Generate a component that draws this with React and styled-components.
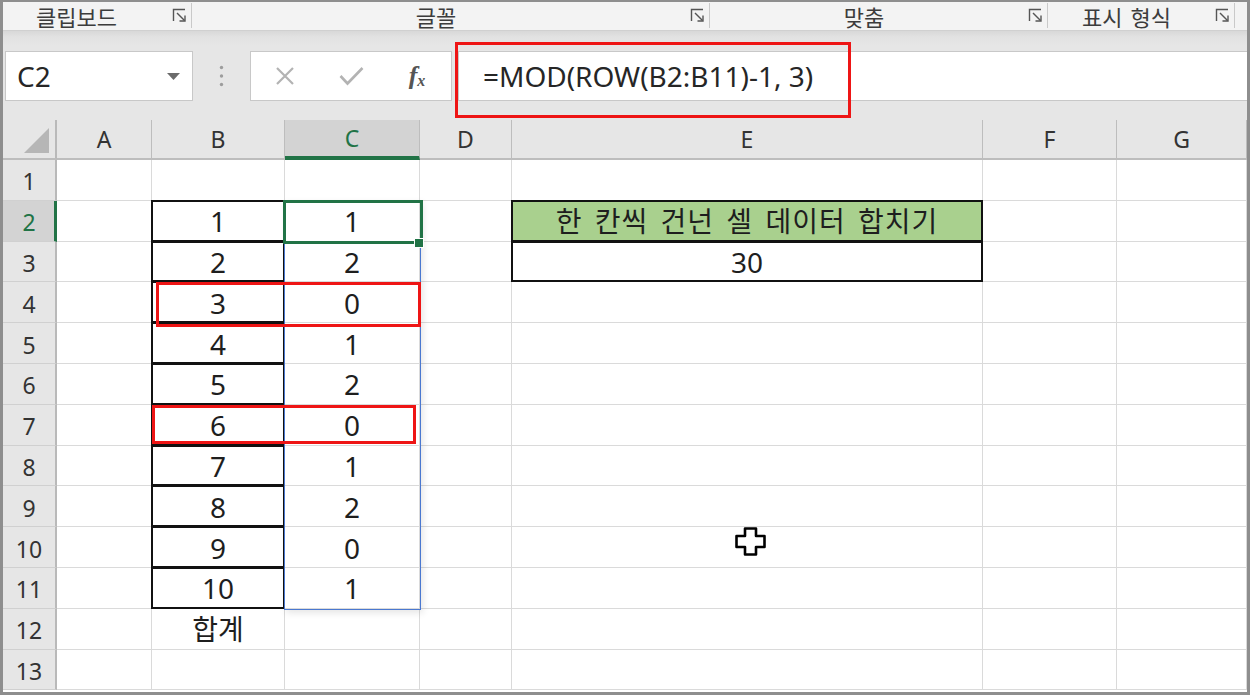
import React from "react";
import styled, { createGlobalStyle } from "styled-components";

const GlobalStyle = createGlobalStyle`
  *, *::before, *::after { box-sizing: border-box; }
  html, body { margin: 0; padding: 0; background: #ffffff; }
  body { font-family: "Noto Sans", "Noto Sans CJK KR", sans-serif; }
`;

const FONT = `"Noto Sans", "Noto Sans CJK KR", sans-serif`;
const KR = `"Noto Sans CJK KR", "Noto Sans", sans-serif`;
const GREEN = "#217346";

const Frame = styled.div`
  position: relative;
  width: 1250px;
  height: 695px;
  border: 3px solid #8e8e8e;
  border-top-width: 2px;
  overflow: hidden;
  background: #fff;
  display: flex;
  flex-direction: column;
`;

/* ---------- Ribbon group labels ---------- */
const Ribbon = styled.div`
  flex: none;
  height: 29px;
  display: flex;
  background: #f3f3f3;
  border-bottom: 1px solid #d0d0d0;
`;

const Group = styled.div`
  flex: none;
  width: ${(p) => p.$w}px;
  display: flex;
  align-items: center;
  padding-right: 4px;
  margin: 1px 0 2px;
  border-right: 1px solid #c9c9c9;
`;

const GroupLabel = styled.span`
  flex: 1;
  text-align: center;
  padding-right: ${(p) => p.$shift}px;
  font-family: ${KR};
  font-size: 22px;
  line-height: 1;
  word-spacing: 3px;
  color: #3c3c3c;
`;

const Launcher = () => (
  <svg width="15" height="15" viewBox="0 0 15 15" fill="none" stroke="#555" strokeWidth="1.4">
    <path d="M1.5 13V1.5H13" />
    <path d="M5 5l7.5 7.5" />
    <path d="M13 7.5V13H7.5" />
  </svg>
);

/* ---------- Formula bar ---------- */
const FormulaBar = styled.div`
  flex: none;
  height: 89px;
  display: flex;
  align-items: flex-start;
  padding: 20px 0 0 2px;
  background: linear-gradient(#d8d8d8, #e2e2e2 6px, #e6e6e6 14px);
`;

const WhiteBox = styled.div`
  flex: none;
  height: 50px;
  background: #fff;
  border: 1px solid #c8c8c8;
  display: flex;
  align-items: center;
`;

const NameBox = styled(WhiteBox)`
  width: 188px;
  padding: 0 12px 0 11px;
  justify-content: space-between;
  font-family: ${FONT};
  font-size: 28px;
  line-height: 1;
  color: #262626;
`;

const Grip = styled.div`
  flex: none;
  width: 57px;
  height: 50px;
  display: flex;
  align-items: center;
  justify-content: center;
`;

const ButtonBox = styled(WhiteBox)`
  width: 202px;
  display: grid;
  grid-template-columns: repeat(3, 66px);
  padding-left: 1px;
  justify-items: center;
`;

const Fx = styled.span`
  font-family: "Liberation Serif", serif;
  font-style: italic;
  font-weight: bold;
  font-size: 26px;
  line-height: 1;
  color: #555;
  & sub {
    font-size: 16px;
    vertical-align: -2px;
  }
`;

const FormulaInput = styled(WhiteBox)`
  flex: 1;
  margin-left: 6px;
  border-right: none;
  padding-left: 24px;
  font-family: ${FONT};
  font-size: 28px;
  line-height: 1;
  color: #262626;
`;

/* ---------- Sheet ---------- */
const COLS = [
  { id: "A", w: 95 },
  { id: "B", w: 133 },
  { id: "C", w: 135 },
  { id: "D", w: 92 },
  { id: "E", w: 471 },
  { id: "F", w: 134 },
  { id: "G", w: 130 },
];

const Sheet = styled.div`
  flex: none;
  display: grid;
  grid-template-columns: 54px ${COLS.map((c) => c.w + "px").join(" ")};
  grid-template-rows: 40px;
  grid-auto-rows: 40.8px;
`;

const Corner = styled.div`
  background: #e6e6e6;
  border-right: 2px solid #b9b9b9;
  border-bottom: 2px solid #bdbdbd;
  display: flex;
  align-items: flex-end;
  justify-content: flex-end;
  padding: 0 6px 5px 0;
`;

const CornerTriangle = styled.div`
  width: 25px;
  height: 25px;
  background: #b6b6b6;
  clip-path: polygon(100% 0, 100% 100%, 0 100%);
`;

const ColHead = styled.div`
  background: ${(p) => (p.$sel ? "#d3d3d3" : "#e6e6e6")};
  border-right: 1px solid #bdbdbd;
  border-bottom: ${(p) => (p.$sel ? `4px solid ${GREEN}` : "2px solid #bdbdbd")};
  display: flex;
  align-items: center;
  justify-content: center;
  padding-top: ${(p) => (p.$sel ? "1px" : "0")};
  font-family: ${FONT};
  font-size: 23px;
  line-height: 1;
  color: ${(p) => (p.$sel ? GREEN : "#333")};
`;

const RowHead = styled.div`
  background: ${(p) => (p.$sel ? "#d3d3d3" : "#e6e6e6")};
  border-right: ${(p) => (p.$sel ? `3px solid ${GREEN}` : "2px solid #b9b9b9")};
  border-bottom: 1px solid #d0d0d0;
  display: flex;
  align-items: center;
  justify-content: center;
  padding-top: 4px;
  padding-left: ${(p) => (p.$sel ? "1px" : "0")};
  font-family: ${FONT};
  font-size: 23px;
  line-height: 1;
  color: ${(p) => (p.$sel ? GREEN : "#333")};
`;

const Cell = styled.div`
  background: ${(p) => p.$fill || "#fff"};
  border-right: 1px solid #dadada;
  border-bottom: 1px solid #dadada;
  display: flex;
  align-items: center;
  justify-content: center;
  padding-top: 1px;
  font-family: ${FONT};
  font-size: 28px;
  line-height: 1;
  color: #1e1e1e;
  white-space: nowrap;
  ${(p) =>
    p.$wide &&
    `
    letter-spacing: 1px;
    word-spacing: 4px;
  `}
  ${(p) =>
    p.$framed &&
    `
    position: relative;
    &::after {
      content: "";
      position: absolute;
      inset: -1px;
      border: 2px solid #111;
    }
  `}
`;

/* ---------- Overlays (drawn over the grid) ---------- */
const Overlay = styled.div`
  position: absolute;
  left: ${(p) => p.$x - 3}px;
  top: ${(p) => p.$y - 2}px;
  width: ${(p) => p.$w}px;
  height: ${(p) => p.$h}px;
  pointer-events: none;
`;

const SpillBox = styled(Overlay)`
  border: 1.5px solid #4a78d0;
  box-shadow: 2px 3px 7px rgba(0, 0, 0, 0.1);
`;

const ActiveBox = styled(Overlay)`
  border: 3px solid ${GREEN};
`;

const FillHandle = styled(Overlay)`
  background: ${GREEN};
  border: 1px solid #fff;
`;

const RedBox = styled(Overlay)`
  border: 3px solid #ee1515;
`;

const CursorIcon = styled.svg`
  position: absolute;
  left: ${(p) => p.$x - 3}px;
  top: ${(p) => p.$y - 2}px;
  pointer-events: none;
`;

const C_VALUES = [1, 2, 0, 1, 2, 0, 1, 2, 0, 1];

function cellData(row, col) {
  if (col === "B") {
    if (row >= 2 && row <= 11) return { text: String(row - 1), framed: true };
    if (row === 12) return { text: "합계" };
  }
  if (col === "C" && row >= 2 && row <= 11) return { text: String(C_VALUES[row - 2]) };
  if (col === "E") {
    if (row === 2)
      return { text: "한 칸씩 건넌 셀 데이터 합치기", framed: true, fill: "#a9d08e", wide: true };
    if (row === 3) return { text: "30", framed: true };
  }
  return { text: "" };
}

const GROUPS = [
  { label: "클립보드", w: 189, shift: 22 },
  { label: "글꼴", w: 518, shift: 10 },
  { label: "맞춤", w: 338, shift: 10 },
  { label: "표시 형식", w: 187, shift: 10 },
];

export default function App() {
  const rows = Array.from({ length: 13 }, (_, i) => i + 1);
  return (
    <>
      <GlobalStyle />
      <Frame>
        <Ribbon>
          {GROUPS.map((g) => (
            <Group key={g.label} $w={g.w}>
              <GroupLabel $shift={g.shift}>{g.label}</GroupLabel>
              <Launcher />
            </Group>
          ))}
        </Ribbon>

        <FormulaBar>
          <NameBox>
            <span>C2</span>
            <svg width="13" height="7" viewBox="0 0 13 7">
              <polygon points="0,0 13,0 6.5,7" fill="#6b6b6b" />
            </svg>
          </NameBox>
          <Grip>
            <svg width="5" height="22" viewBox="0 0 5 22">
              <circle cx="2.5" cy="2.5" r="1.7" fill="#9d9d9d" />
              <circle cx="2.5" cy="11" r="1.7" fill="#9d9d9d" />
              <circle cx="2.5" cy="19.5" r="1.7" fill="#9d9d9d" />
            </svg>
          </Grip>
          <ButtonBox>
            <svg width="20" height="20" viewBox="0 0 20 20" stroke="#b3b3b3" strokeWidth="2.2">
              <path d="M2 2L18 18M18 2L2 18" />
            </svg>
            <svg width="25" height="20" viewBox="0 0 25 20" fill="none" stroke="#b3b3b3" strokeWidth="2.6">
              <path d="M1.5 10L8.5 17.5L23.5 2" />
            </svg>
            <Fx>
              f<sub>x</sub>
            </Fx>
          </ButtonBox>
          <FormulaInput>=MOD(ROW(B2:B11)-1, 3)</FormulaInput>
        </FormulaBar>

        <Sheet>
          <Corner>
            <CornerTriangle />
          </Corner>
          {COLS.map((c) => (
            <ColHead key={c.id} $sel={c.id === "C"}>
              {c.id}
            </ColHead>
          ))}
          {rows.map((r) => (
            <React.Fragment key={r}>
              <RowHead $sel={r === 2}>{r}</RowHead>
              {COLS.map((c) => {
                const d = cellData(r, c.id);
                return (
                  <Cell key={c.id} $framed={d.framed} $fill={d.fill} $wide={d.wide}>
                    {d.text}
                  </Cell>
                );
              })}
            </React.Fragment>
          ))}
        </Sheet>

        <SpillBox $x={284} $y={200} $w={137} $h={410} />
        <ActiveBox $x={283} $y={199.5} $w={140} $h={44} />
        <FillHandle $x={414} $y={238} $w={10} $h={10} />

        <RedBox $x={455} $y={42} $w={396} $h={76} />
        <RedBox $x={156} $y={282} $w={265} $h={45} />
        <RedBox $x={152} $y={405} $w={264} $h={39} />

        <CursorIcon $x={735} $y={527} width="31" height="29" viewBox="0 0 31 29">
          <polygon
            points="10,1.5 21,1.5 21,9 29.5,9 29.5,20 21,20 21,27.5 10,27.5 10,20 1.5,20 1.5,9 10,9"
            fill="#fff"
            stroke="#000"
            strokeWidth="2.6"
            strokeLinejoin="round"
          />
        </CursorIcon>
      </Frame>
    </>
  );
}
